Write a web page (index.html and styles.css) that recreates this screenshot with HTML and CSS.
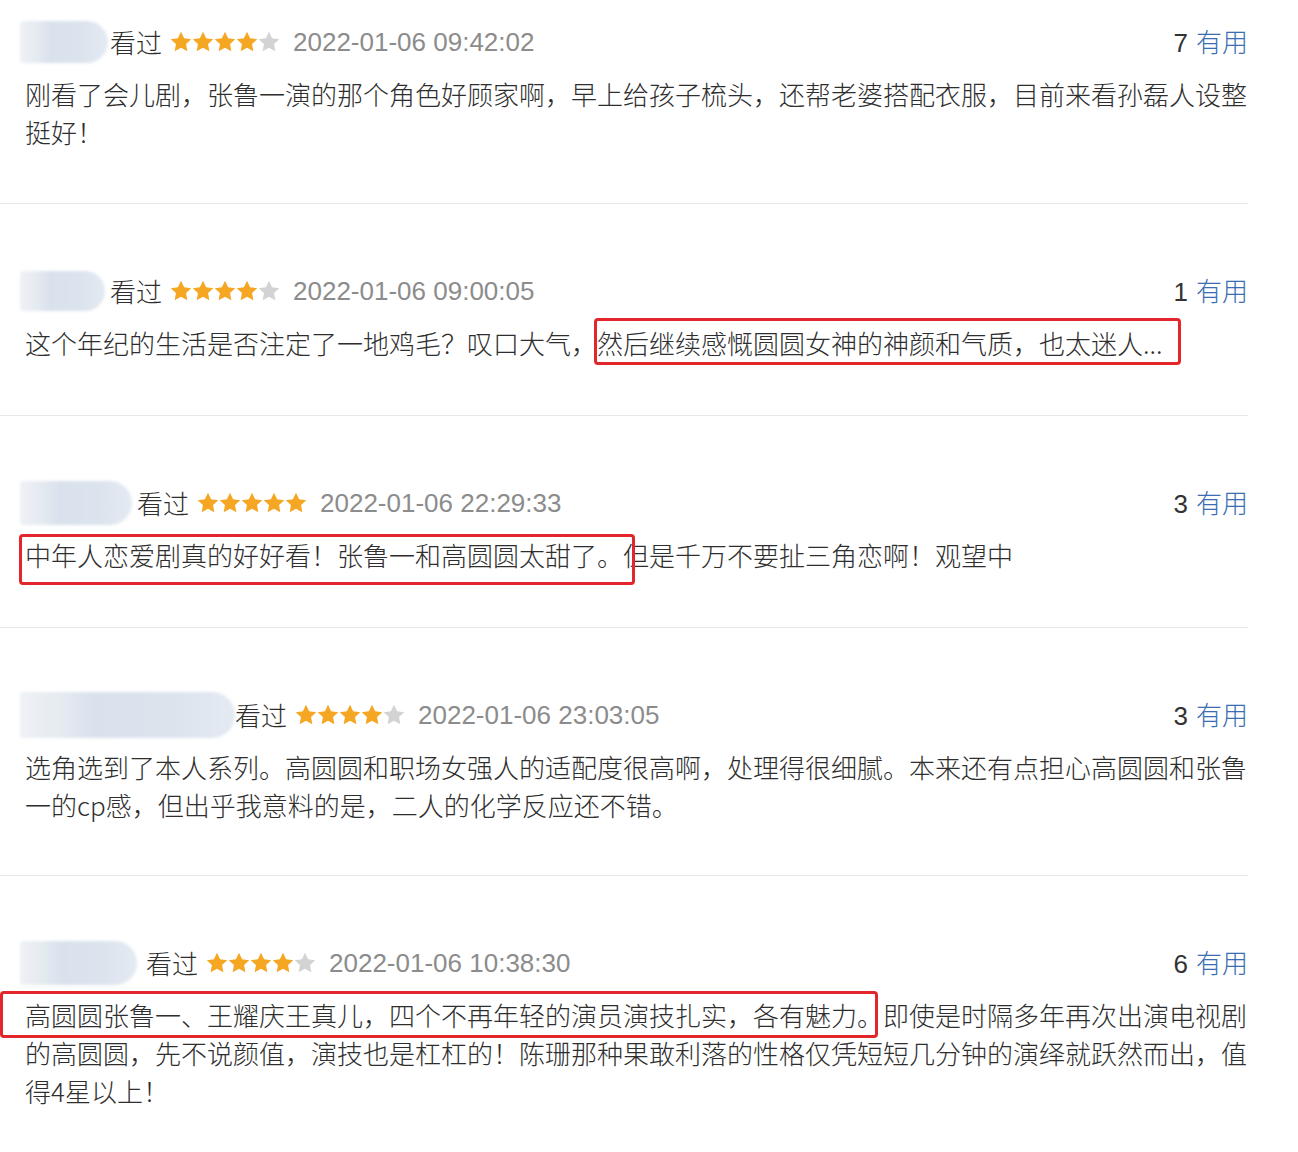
FILE: index.html
```html
<!DOCTYPE html>
<html lang="zh-CN">
<head>
<meta charset="utf-8">
<title>短评</title>
<link rel="stylesheet" href="styles.css">
</head>
<body>
<svg class="defs" width="0" height="0" aria-hidden="true">
  <symbol id="star" viewBox="0 0 24 24">
    <path d="M12 .8l3.4 7.1 7.8 1-5.7 5.4 1.4 7.7L12 18.2 5.1 22l1.4-7.7L.8 8.9l7.8-1z"/>
  </symbol>
</svg>
<div class="list">
  <div class="item first">
    <div class="head">
      <div class="meta">
        <span class="avatar a1"></span>
        <span class="watched">看过</span>
        <span class="stars">
          <svg class="star on"><use href="#star"/></svg><svg class="star on"><use href="#star"/></svg><svg class="star on"><use href="#star"/></svg><svg class="star on"><use href="#star"/></svg><svg class="star off"><use href="#star"/></svg>
        </span>
        <span class="time">2022-01-06 09:42:02</span>
      </div>
      <div class="useful"><span class="count">7</span><span class="vote">有用</span></div>
    </div>
    <p class="body">刚看了会儿剧，张鲁一演的那个角色好顾家啊，早上给孩子梳头，还帮老婆搭配衣服，目前来看孙磊人设整挺好！</p>
  </div>

  <div class="item">
    <div class="head">
      <div class="meta">
        <span class="avatar a2"></span>
        <span class="watched">看过</span>
        <span class="stars">
          <svg class="star on"><use href="#star"/></svg><svg class="star on"><use href="#star"/></svg><svg class="star on"><use href="#star"/></svg><svg class="star on"><use href="#star"/></svg><svg class="star off"><use href="#star"/></svg>
        </span>
        <span class="time">2022-01-06 09:00:05</span>
      </div>
      <div class="useful"><span class="count">1</span><span class="vote">有用</span></div>
    </div>
    <p class="body">这个年纪的生活是否注定了一地鸡毛？叹口大气，<span class="hl hl2">然后继续感慨圆圆女神的神颜和气质，也太迷人...</span></p>
  </div>

  <div class="item">
    <div class="head">
      <div class="meta">
        <span class="avatar a3"></span>
        <span class="watched">看过</span>
        <span class="stars">
          <svg class="star on"><use href="#star"/></svg><svg class="star on"><use href="#star"/></svg><svg class="star on"><use href="#star"/></svg><svg class="star on"><use href="#star"/></svg><svg class="star on"><use href="#star"/></svg>
        </span>
        <span class="time">2022-01-06 22:29:33</span>
      </div>
      <div class="useful"><span class="count">3</span><span class="vote">有用</span></div>
    </div>
    <p class="body"><span class="hl hl3">中年人恋爱剧真的好好看！张鲁一和高圆圆太甜了。</span>但是千万不要扯三角恋啊！观望中</p>
  </div>

  <div class="item tight">
    <div class="head">
      <div class="meta">
        <span class="avatar a4"></span>
        <span class="watched">看过</span>
        <span class="stars">
          <svg class="star on"><use href="#star"/></svg><svg class="star on"><use href="#star"/></svg><svg class="star on"><use href="#star"/></svg><svg class="star on"><use href="#star"/></svg><svg class="star off"><use href="#star"/></svg>
        </span>
        <span class="time">2022-01-06 23:03:05</span>
      </div>
      <div class="useful"><span class="count">3</span><span class="vote">有用</span></div>
    </div>
    <p class="body">选角选到了本人系列。高圆圆和职场女强人的适配度很高啊，处理得很细腻。本来还有点担心高圆圆和张鲁一的cp感，但出乎我意料的是，二人的化学反应还不错。</p>
  </div>

  <div class="item last">
    <div class="head">
      <div class="meta">
        <span class="avatar a5"></span>
        <span class="watched">看过</span>
        <span class="stars">
          <svg class="star on"><use href="#star"/></svg><svg class="star on"><use href="#star"/></svg><svg class="star on"><use href="#star"/></svg><svg class="star on"><use href="#star"/></svg><svg class="star off"><use href="#star"/></svg>
        </span>
        <span class="time">2022-01-06 10:38:30</span>
      </div>
      <div class="useful"><span class="count">6</span><span class="vote">有用</span></div>
    </div>
    <p class="body"><span class="hl hl5">高圆圆张鲁一、王耀庆王真儿，四个不再年轻的演员演技扎实，各有魅力。</span>即使是时隔多年再次出演电视剧的高圆圆，先不说颜值，演技也是杠杠的！陈珊那种果敢利落的性格仅凭短短几分钟的演绎就跃然而出，值得4星以上！</p>
  </div>
</div>
</body>
</html>
```

FILE: styles.css
```css
body {
  margin: 0;
  background: #ffffff;
  font-family: "Noto Sans CJK SC", "Noto Sans", sans-serif;
  font-weight: 300;
  color: #2e2e2e;
}

.defs {
  position: absolute;
  width: 0;
  height: 0;
  overflow: hidden;
}

.list {
  width: 1248px;
}

.item {
  padding: 67px 0 53px;
  border-bottom: 1px solid #e8e8e8;
}

.item.first {
  padding-top: 22px;
  padding-bottom: 52px;
}

.item.tight {
  padding-bottom: 51px;
}

.item.last {
  border-bottom: none;
}

.head {
  display: flex;
  align-items: center;
  height: 40px;
  padding-left: 20px;
}

.meta {
  display: flex;
  align-items: center;
}

.avatar {
  display: block;
  height: 42px;
  border-radius: 3px 24px 24px 3px;
  background: linear-gradient(90deg, #eef1f5 0%, #e6ebf1 18%, #d9e1ec 35%, #dbe3ed 70%, #e4eaf2 100%);
  filter: blur(1.5px);
}

.a1 { width: 88px; margin-right: 2px; }
.a2 { width: 85px; margin-right: 5px; height: 40px; }
.a3 { width: 112px; margin-right: 5px; height: 44px; }
.a4 { width: 215px; margin-right: 0; height: 46px; }
.a5 { width: 117px; margin-right: 9px; height: 44px; }

.watched {
  font-size: 26px;
  line-height: 40px;
  color: #2e2e2e;
}

.stars {
  display: flex;
  margin-left: 8px;
}

.star {
  width: 22px;
  height: 22px;
}

.star.on {
  fill: #f5a623;
}

.star.off {
  fill: #d3d3d3;
}

.time {
  margin-left: 13px;
  font-family: "Liberation Sans", Arial, sans-serif;
  font-weight: 400;
  font-size: 26px;
  line-height: 40px;
  color: #8c8c8c;
}

.useful {
  margin-left: auto;
  font-size: 26px;
  line-height: 40px;
}

.count {
  font-family: "Liberation Sans", Arial, sans-serif;
  font-weight: 400;
  color: #333333;
  margin-right: 8px;
}

.vote {
  color: #3a6db3;
}

.body {
  margin: 13px 0 0;
  padding-left: 25px;
  font-size: 26px;
  line-height: 38px;
  color: #2e2e2e;
}

.hl {
  position: relative;
}

.hl::after {
  content: "";
  position: absolute;
  border: 3px solid #e3262b;
  border-radius: 4px;
  pointer-events: none;
}

.hl2::after {
  left: -3px;
  right: -18px;
  top: -6px;
  bottom: -4px;
}

.hl3::after {
  left: -6px;
  right: -12px;
  top: -2px;
  bottom: -12px;
}

.hl5::after {
  left: -25px;
  right: 5px;
  top: -5px;
  bottom: -5px;
}
```
